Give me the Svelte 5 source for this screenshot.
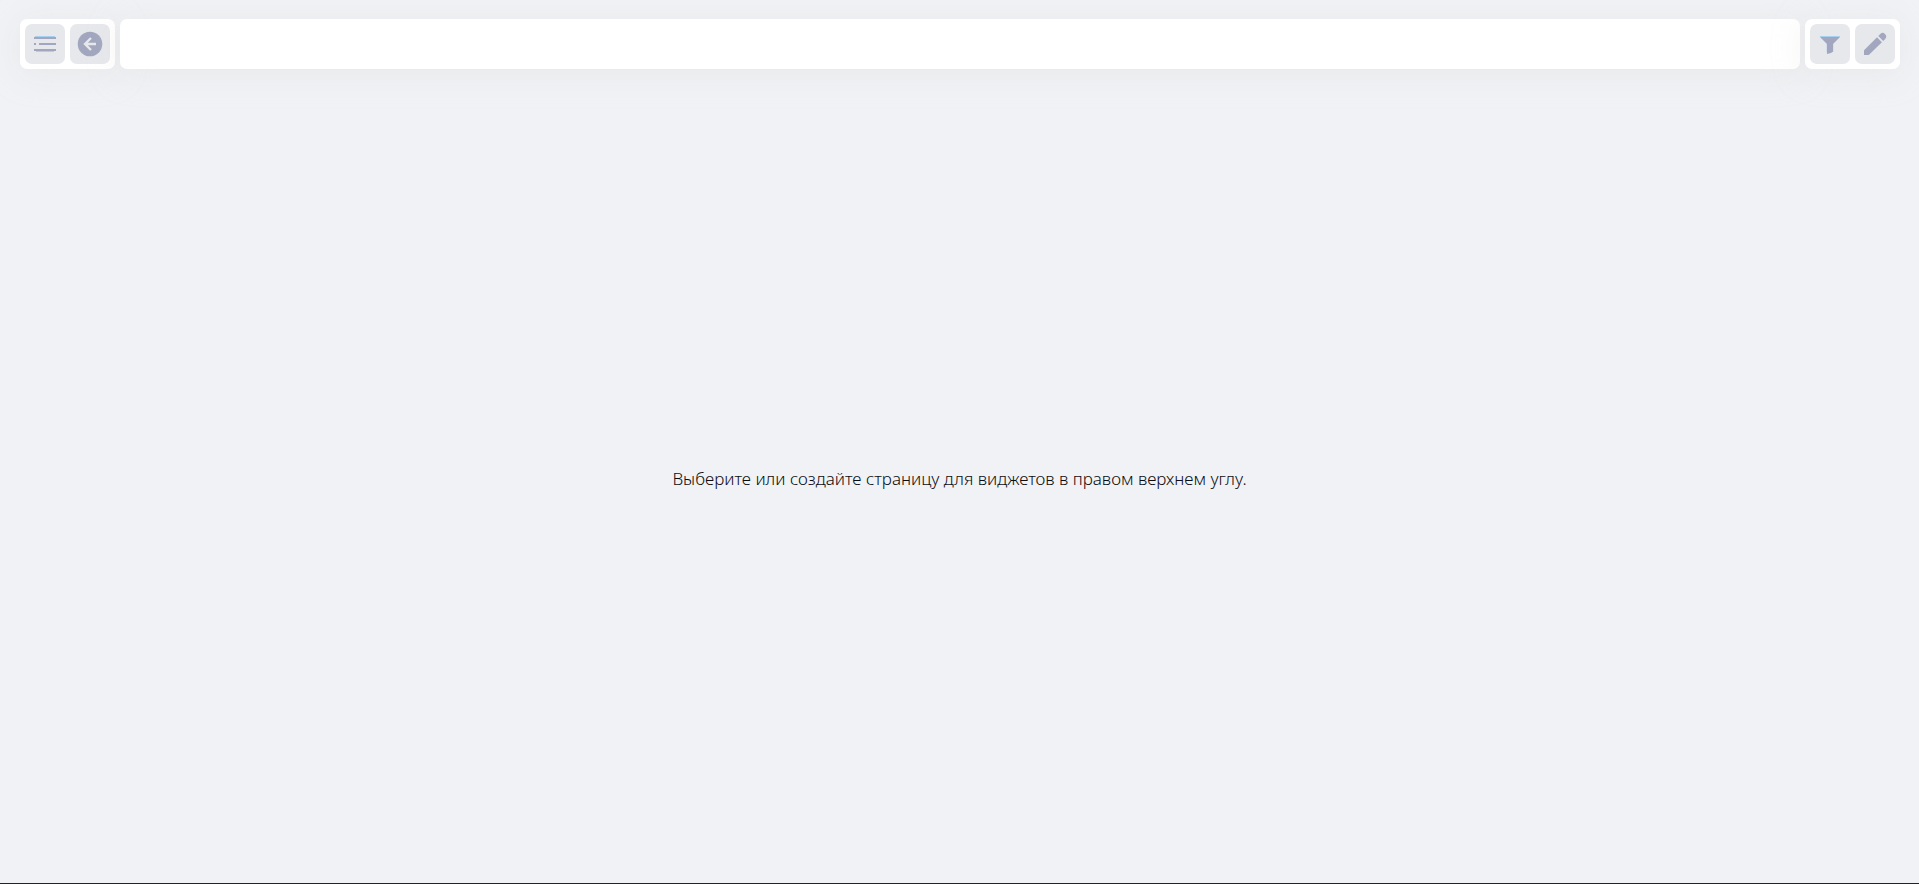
<script lang="ts">
	let title = $state('');
</script>

<div class="page">
	<header class="toolbar">
		<div class="group">
			<button type="button" aria-label="Меню">
				<svg width="24" height="24" viewBox="0 0 24 24" fill="currentColor">
					<path class="glint" d="M2 4h20v1H2zM3 19h18v1H3z" />
					<path d="M1 5h22v2H1zM1 11h2v2H1zM6 11h17v2H6zM1 17h22v2H1z" />
				</svg>
			</button>
			<button type="button" aria-label="Назад">
				<svg width="26" height="26" viewBox="0 0 26 26" fill="none">
					<circle cx="13" cy="13" r="12.3" fill="currentColor" />
					<path class="arrow" d="M19 13H8M14 7l-6 6 6 6" />
				</svg>
			</button>
		</div>

		<input class="title" type="text" aria-label="Страница" bind:value={title} />

		<div class="group">
			<button type="button" aria-label="Фильтр">
				<svg width="24" height="24" viewBox="0 0 24 24" fill="currentColor">
					<path class="glint" d="M2 4h20v1H2zM8.700 12h6.600v8h-6.600z" />
					<path d="M2 5h20l-7 7v7.500L13 21l-4 1V12z" />
				</svg>
			</button>
			<button type="button" aria-label="Редактировать">
				<svg width="24" height="24" viewBox="0 0 24 24" fill="currentColor">
					<path
						d="M1 18.300 14 5.300l4.900 4.900L5.800 23H1zM15.300 4l2-2q2.300-2.200 4.400-.200l.700.700q1.800 2.200-.200 4.400l-2 2z"
					/>
				</svg>
			</button>
		</div>
	</header>

	<main>
		<p>Выберите или создайте страницу для виджетов в правом верхнем углу.</p>
	</main>
</div>

<style>
	:global(body) {
		background: #f0f2f6;
	}

	.page {
		box-sizing: border-box;
		min-height: 100vh;
		display: flex;
		flex-direction: column;
		border-bottom: 1px solid #212327;
		font-family: 'Noto Sans', sans-serif;
		color: #0c0d10;
	}

	.toolbar {
		display: flex;
		gap: 5px;
		padding: 19px 19px 5px 20px;
	}

	.group,
	.title {
		border-radius: 7px;
		background: #fff;
		box-shadow: 0 4px 32px rgba(216, 216, 208, 0.35);
	}

	.group {
		display: flex;
		gap: 5px;
		padding: 5px;
	}

	.title {
		flex: 1;
		min-width: 0;
		border: 0;
		padding: 0 16px;
		font: inherit;
		font-size: 17px;
		color: inherit;
		outline: none;
	}

	button {
		display: flex;
		align-items: center;
		justify-content: center;
		width: 40px;
		height: 40px;
		padding: 0;
		border: 0;
		border-radius: 7px;
		background: #e6e8ec;
		color: #a2a7bf;
		cursor: pointer;
	}

	.glint {
		fill: #a5d0ee;
	}

	.arrow {
		stroke: #e6e8ec;
		stroke-width: 2.4;
	}

	main {
		flex: 1;
		display: flex;
		align-items: center;
		justify-content: center;
	}

	p {
		margin: 0;
		font-size: 17px;
		font-weight: 300;
		line-height: 24px;
	}
</style>
